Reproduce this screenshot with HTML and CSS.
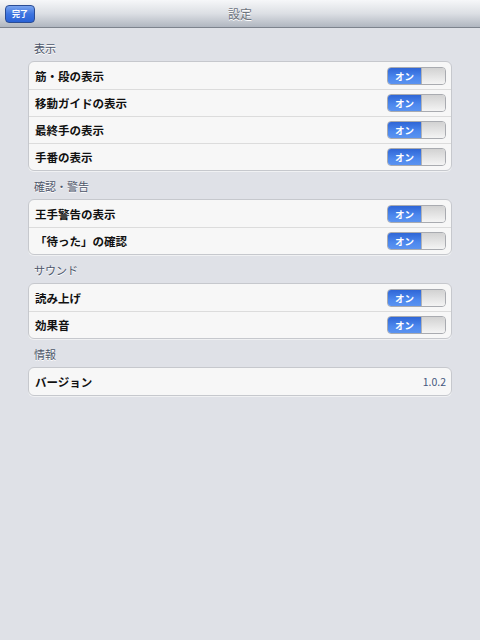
FILE: index.html
```html
<!DOCTYPE html>
<html>
  <head>
    <meta charset="utf-8" />
    <title>設定</title>
    <link rel="stylesheet" href="styles.css">
  </head>
  <body>
    <div class="navbar">
      <button class="done-btn">完了</button>
      <div class="nav-title">設定</div>
    </div>

    <div class="content">
      <div class="section">
        <div class="section-header">表示</div>
        <div class="group">
          <div class="row">
            <span class="row-label">筋・段の表示</span>
            <span class="toggle"><span class="toggle-on">オン</span><span class="toggle-knob"></span></span>
          </div>
          <div class="row">
            <span class="row-label">移動ガイドの表示</span>
            <span class="toggle"><span class="toggle-on">オン</span><span class="toggle-knob"></span></span>
          </div>
          <div class="row">
            <span class="row-label">最終手の表示</span>
            <span class="toggle"><span class="toggle-on">オン</span><span class="toggle-knob"></span></span>
          </div>
          <div class="row">
            <span class="row-label">手番の表示</span>
            <span class="toggle"><span class="toggle-on">オン</span><span class="toggle-knob"></span></span>
          </div>
        </div>
      </div>

      <div class="section">
        <div class="section-header">確認・警告</div>
        <div class="group">
          <div class="row">
            <span class="row-label">王手警告の表示</span>
            <span class="toggle"><span class="toggle-on">オン</span><span class="toggle-knob"></span></span>
          </div>
          <div class="row">
            <span class="row-label">「待った」の確認</span>
            <span class="toggle"><span class="toggle-on">オン</span><span class="toggle-knob"></span></span>
          </div>
        </div>
      </div>

      <div class="section">
        <div class="section-header">サウンド</div>
        <div class="group">
          <div class="row">
            <span class="row-label">読み上げ</span>
            <span class="toggle"><span class="toggle-on">オン</span><span class="toggle-knob"></span></span>
          </div>
          <div class="row">
            <span class="row-label">効果音</span>
            <span class="toggle"><span class="toggle-on">オン</span><span class="toggle-knob"></span></span>
          </div>
        </div>
      </div>

      <div class="section">
        <div class="section-header">情報</div>
        <div class="group">
          <div class="row">
            <span class="row-label">バージョン</span>
            <span class="row-value">1.0.2</span>
          </div>
        </div>
      </div>
    </div>
  </body>
</html>
```

FILE: styles.css
```css
* {
  box-sizing: border-box;
}

body {
  margin: 0;
  height: 640px;
  background-color: #dfe1e7;
  font-family: "Noto Sans CJK JP", "Liberation Sans", sans-serif;
}

/* top bar */
.navbar {
  height: 28px;
  display: flex;
  align-items: center;
  justify-content: center;
  position: relative;
  background: linear-gradient(#f6f7f9, #dcdfe4 50%, #b0b6c0);
  border-bottom: 1px solid #7d838d;
}

.nav-title {
  font-size: 12px;
  color: #6d737d;
  text-shadow: 0 1px 0 #fff;
}

.done-btn {
  position: absolute;
  left: 5px;
  top: 5px;
  width: 30px;
  height: 18px;
  padding: 0;
  border: 1px solid #2a4c94;
  border-radius: 4px;
  background: linear-gradient(#7aa4ee, #3d74e0 50%, #2a62d6);
  color: #fff;
  font-family: inherit;
  font-size: 8px;
  font-weight: bold;
  line-height: 16px;
}

/* settings list */
.content {
  padding: 13px 28px 0;
}

.section + .section {
  margin-top: 8px;
}

.section-header {
  padding: 0 6px 6px;
  font-size: 11px;
  line-height: 14px;
  color: #4d566a;
  text-shadow: 0 1px 0 #fff;
}

.group {
  background-color: #f7f7f7;
  border: 1px solid #c6c8cd;
  border-radius: 6px;
  box-shadow: 0 1px 0 #f0f1f3;
}

.row {
  height: 27px;
  display: flex;
  align-items: center;
  justify-content: space-between;
  padding: 0 5px 0 6px;
}

.row + .row {
  border-top: 1px solid #dcdcdc;
}

.row-label {
  font-size: 11.5px;
  font-weight: bold;
  color: #111;
}

.row-value {
  font-size: 10.5px;
  color: #45577e;
}

/* on/off switch */
.toggle {
  display: flex;
  width: 59px;
  height: 18px;
  border: 1px solid #a9abb0;
  border-radius: 4px;
  overflow: hidden;
}

.toggle-on {
  width: 33px;
  background: linear-gradient(#2f66d6, #4c88ee 60%, #5b93f0);
  color: #fff;
  font-size: 9.5px;
  font-weight: bold;
  line-height: 16px;
  text-align: center;
}

.toggle-knob {
  flex: 1;
  background: linear-gradient(#d2d2d2, #f4f4f4);
  border-left: 1px solid #b0b2b6;
}
```
